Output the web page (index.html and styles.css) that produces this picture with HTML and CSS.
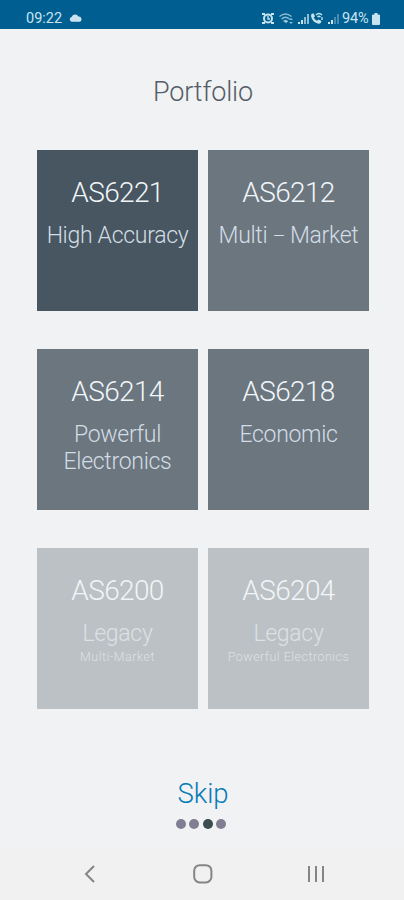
FILE: index.html
```html
<!DOCTYPE html>
<html lang="en">
<head>
<meta charset="utf-8">
<meta name="viewport" content="width=device-width, initial-scale=1">
<title>Portfolio</title>
<link rel="stylesheet" href="styles.css">
</head>
<body>
<header class="status">
  <span class="time">09:22</span>
  <svg class="cloud" width="13" height="8" viewBox="0 0 13 8"><path d="M2.8 7.8a2.4 2.4 0 0 1-.2-4.7A3.7 3.7 0 0 1 9.400 2.500a2.700 2.700 0 0 1 1 5.300z"/></svg>
  <svg class="signals" width="88" height="14" viewBox="0 0 88 14">
    <path d="M0 1h3v2H0zM9 1h3v2H9zM0 10h3v2H0zM9 10h3v2H9z"/>
    <circle cx="6" cy="6.500" r="4" class="line thick"/>
    <path class="line" d="M6 4v3h2"/>
    <path class="line dim" d="M17.500 4.500q6-5 12 0M19.500 7q4-3.500 8 0M21.500 9.500q2-2 4 0"/>
    <path class="dim" d="M22 9h4l-2 2.500zM27 8l2-2 2 2zM27 10h4l-2 2z"/>
    <path d="M36 10h2v2h-2zM39 8h2v4h-2z"/><path class="dim" d="M42 5h2v7h-2zM45 2h2v10h-2z"/>
    <path d="M49.500 2l2-.8 1.500 3-1.300 1.200q1 2.200 3.300 3.300L56.500 7.500l3 1.500-.8 2q-1 1-3 .6-5-1.600-6.500-6.600-.3-2 .3-3z"/>
    <path class="line" d="M54 3q3-3 6 0M55.500 5q1.500-1.500 3 0M60 5v3"/>
    <path d="M66 10h2v2h-2zM69 8h2v4h-2z"/><path class="faint" d="M72 5h2v7h-2zM75 2h2v10h-2z"/>
  </svg>
  <span class="percent">94%</span>
  <svg class="battery" width="8" height="12" viewBox="0 0 8 12"><path d="M2.500 0h3v1.500H7q1 0 1 1V11q0 1-1 1H1q-1 0-1-1V2.500q0-1 1-1h1.500z"/></svg>
</header>
<main>
  <h1>Portfolio</h1>
  <section class="grid">
    <article class="card dark"><h2>AS6221</h2><p>High Accuracy</p></article>
    <article class="card"><h2>AS6212</h2><p>Multi <span class="dash">–</span> Market</p></article>
    <article class="card"><h2>AS6214</h2><p>Powerful Electronics</p></article>
    <article class="card"><h2>AS6218</h2><p>Economic</p></article>
    <article class="card legacy"><h2>AS6200</h2><p>Legacy</p><small>Multi-Market</small></article>
    <article class="card legacy"><h2>AS6204</h2><p>Legacy</p><small>Powerful Electronics</small></article>
  </section>
  <a class="skip">Skip</a>
  <div class="dots"><i></i><i></i><i class="active"></i><i></i></div>
</main>
<nav>
  <svg width="12" height="18" viewBox="0 0 12 18"><path d="M10 1L2 9l8 8"/></svg>
  <svg width="20" height="20" viewBox="0 0 20 20"><rect x="1.200" y="1.200" width="17.200" height="17.200" rx="5.500"/></svg>
  <svg width="18" height="18" viewBox="0 0 18 18"><path d="M2 1v16M9 1v16M16 1v16"/></svg>
</nav>
</body>
</html>
```
FILE: styles.css
```css
* { box-sizing: border-box; }
body {
  margin: 0;
  height: 900px;
  display: flex;
  flex-direction: column;
  background: #f0f2f4;
  font-family: Roboto, sans-serif;
  font-weight: 300;
  overflow: hidden;
}
.status {
  height: 29px;
  flex: none;
  display: flex;
  align-items: center;
  padding: 9px 24px 0 26px;
  background: #005f90;
  color: #c9e4f1;
  font-size: 14.500px;
  font-weight: 400;
  line-height: 18px;
}
.time { width: 37px; }
.cloud { margin-left: 6px; margin-top: -2px; }
.status svg { fill: #c9e4f1; flex: none; }
.signals { margin-left: auto; margin-right: -8px; }
.percent { width: 29px; letter-spacing: -.1px; }
.battery { margin-left: 1px; }
.status .line { fill: none; stroke: #c9e4f1; stroke-width: 1.300; }
.status .thick { stroke-width: 2; }
.dim { opacity: .7; }
.faint { opacity: .35; }
main {
  flex: 1;
  display: flex;
  flex-direction: column;
  align-items: center;
  text-align: center;
  padding-left: 2px;
}
h1, h2, p { margin: 0; font-weight: 300; }
h1 {
  margin-top: 46px;
  font-size: 27px;
  line-height: 34px;
  letter-spacing: -.15px;
  color: #555d66;
}
.grid {
  margin-top: 40.500px;
  display: grid;
  grid-template-columns: 161px 161px;
  grid-auto-rows: 161.500px;
  gap: 37.500px 10px;
}
.card {
  padding-top: 25px;
  background: #6b767f;
  color: #d3dde6;
}
.card.dark { background: #475660; }
.card.legacy { background: #bbc1c4; color: #dce1e4; }
h2 {
  font-size: 28px;
  line-height: 36px;
  letter-spacing: -.65px;
  color: #f0f5f9;
}
.card p {
  margin-top: 11px;
  font-size: 23px;
  line-height: 27px;
  letter-spacing: -.3px;
}
.dash { display: inline-block; width: 12px; font-size: 20px; letter-spacing: 0; line-height: 1; }
small {
  display: block;
  margin-top: 2px;
  font-size: 12.500px;
  line-height: 15px;
  letter-spacing: .48px;
}
.skip {
  margin-top: 68px;
  font-size: 27.500px;
  line-height: 34px;
  color: #087bb4;
}
.dots { display: flex; gap: 3.500px; margin: 8px 0 0 -4px; }
.dots i { width: 10px; height: 10px; border-radius: 50%; background: #817e93; }
.dots .active { background: #3c4b50; }
nav {
  height: 53px;
  flex: none;
  display: flex;
  justify-content: space-between;
  align-items: center;
  padding: 0 79px 0 84px;
  background: #f1f1f1;
}
nav svg { fill: none; stroke: #858585; stroke-width: 2; }
nav svg:nth-child(2) { margin-left: 2px; }
```
